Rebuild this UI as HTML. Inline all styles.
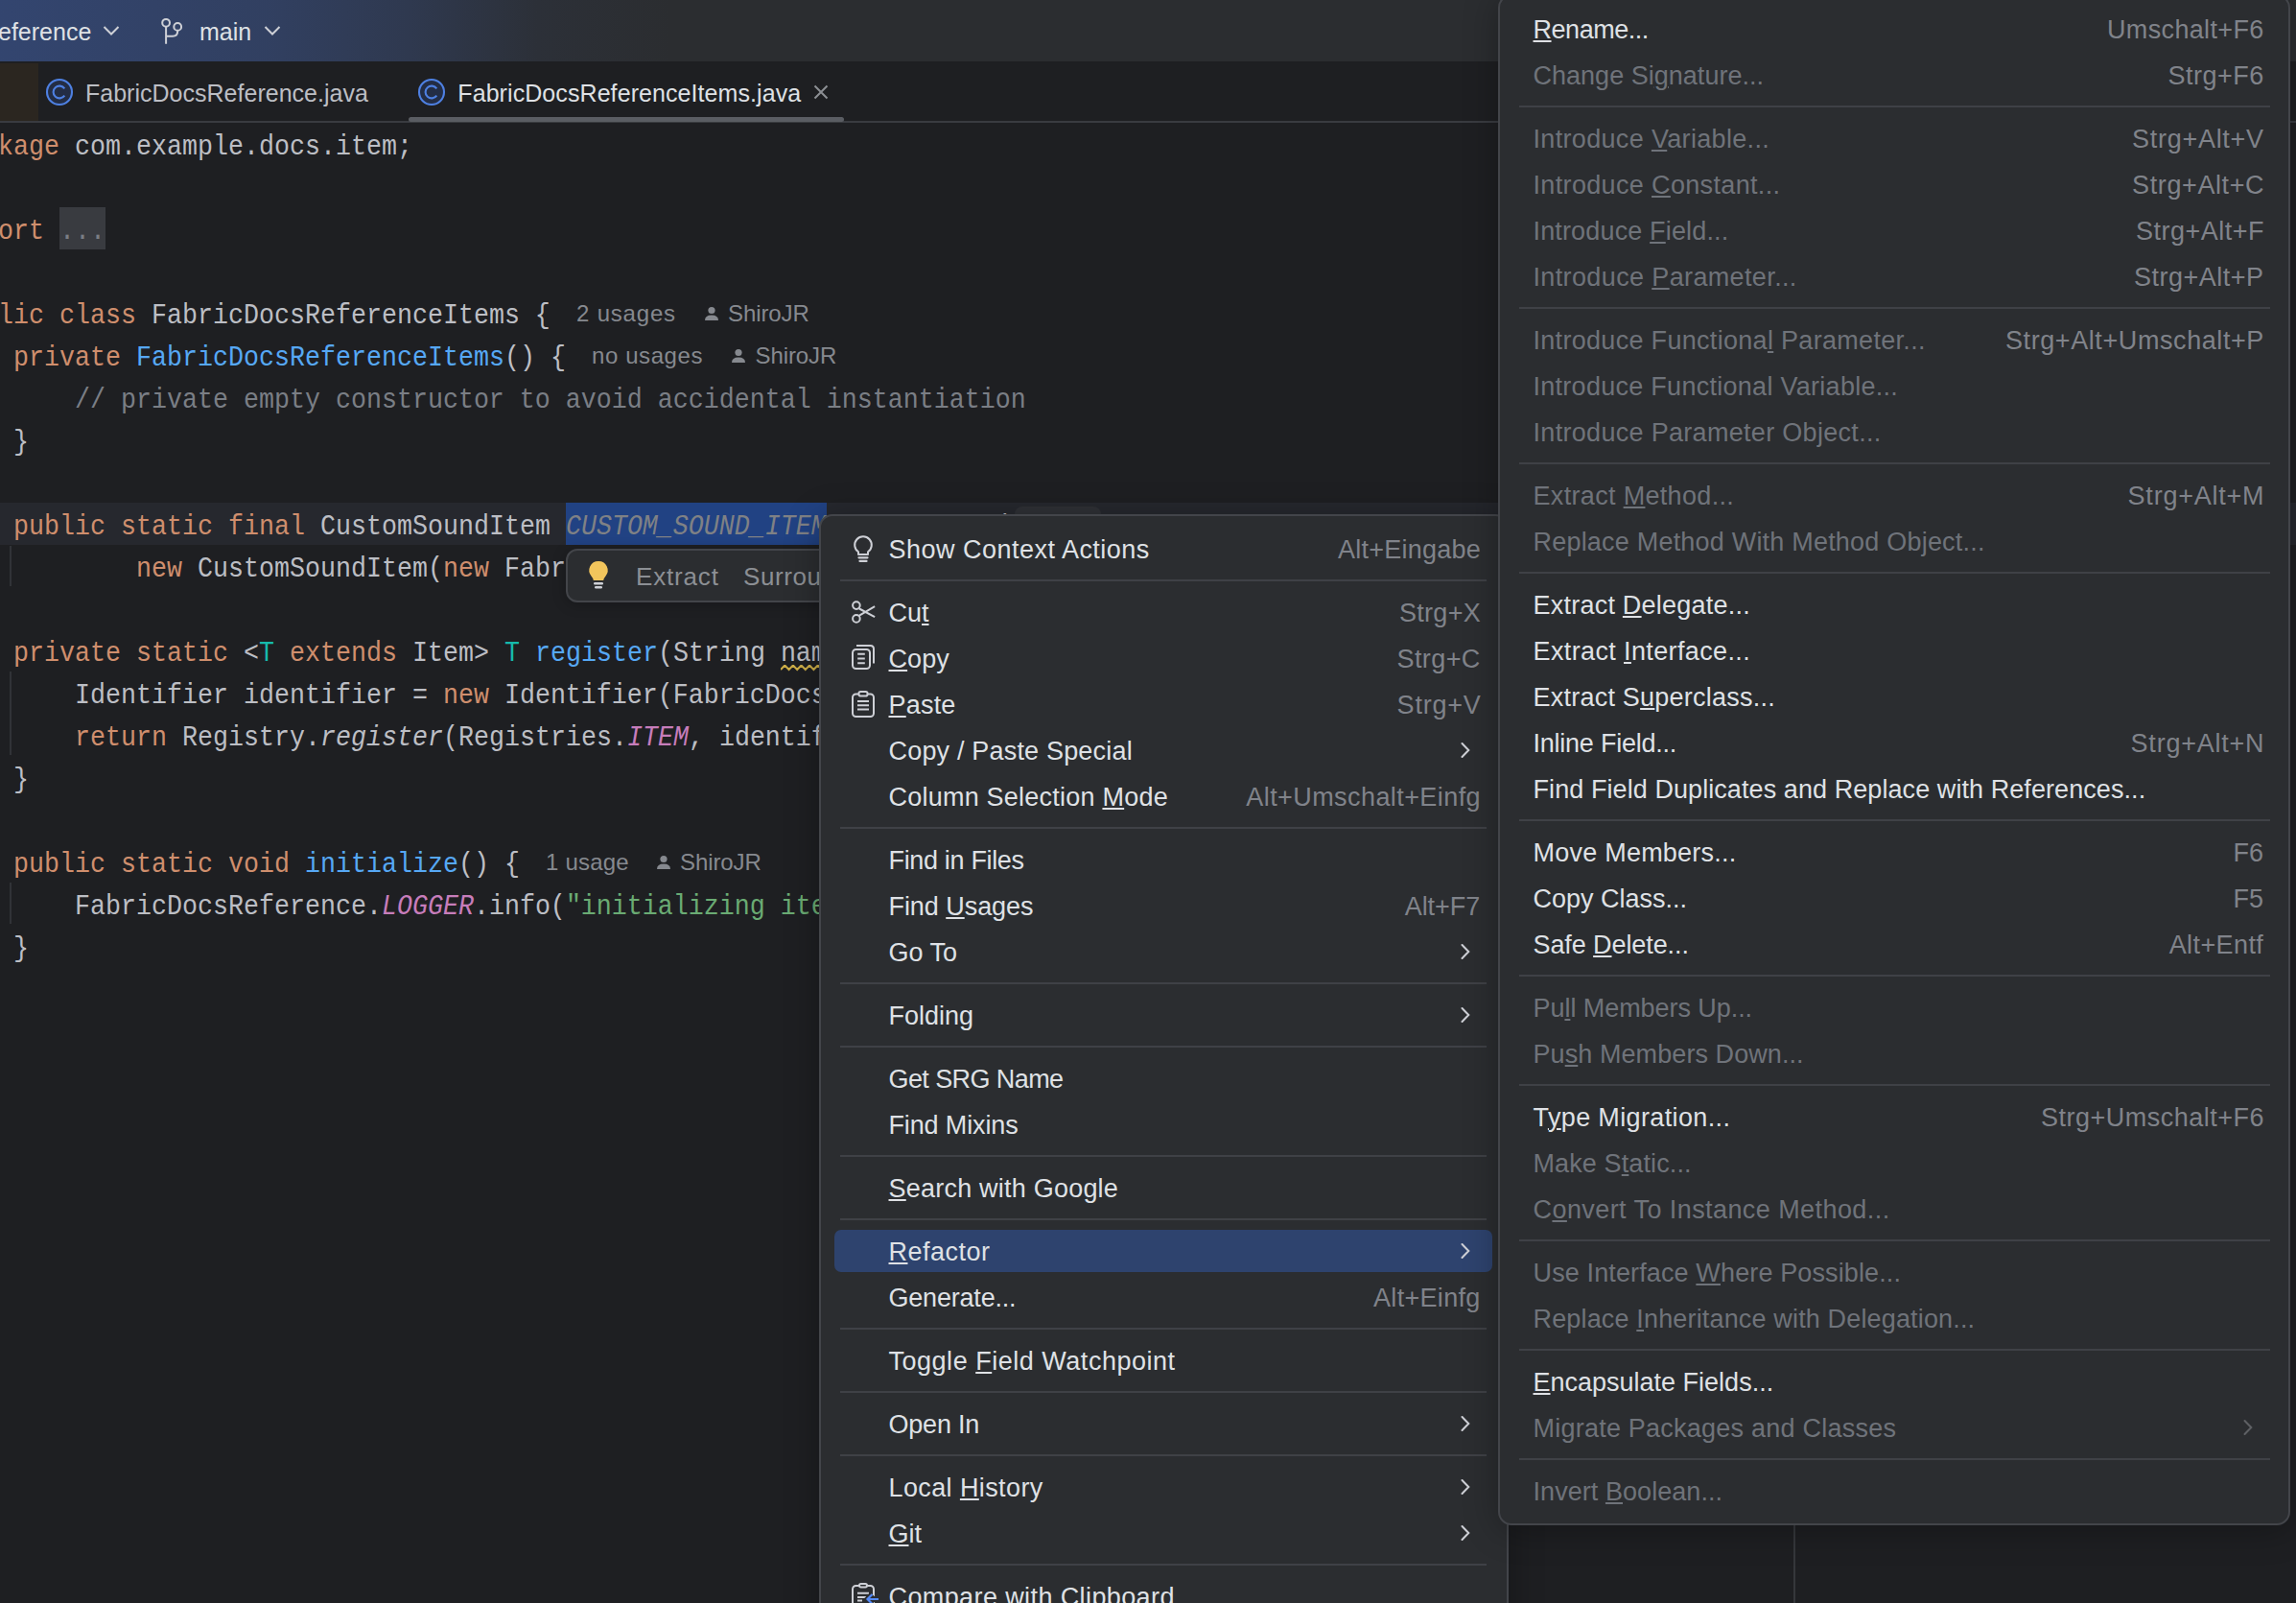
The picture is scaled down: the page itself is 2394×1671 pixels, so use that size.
<!DOCTYPE html><html><head><meta charset="utf-8"><style>
*{margin:0;padding:0;box-sizing:border-box}
html,body{width:2394px;height:1671px;overflow:hidden;background:#1E1F22;position:relative}
.a{position:absolute;white-space:pre}
.s{font-family:"Liberation Sans",sans-serif}
.m{font-family:"Liberation Mono",monospace}
.code{font-size:26.67px;line-height:44px;height:44px;color:#BCBEC4;transform:scaleY(1.08);transform-origin:0 28px}
.k{color:#CF8E6D} .f{color:#56A8F5} .c{color:#7A7E85} .st{color:#6AAB73} .sf{color:#C77DBB;font-style:italic} .tp{color:#16BAAC} .sel{color:#7F8185;font-style:italic} .it{font-style:italic}
.hint{font-size:24px;line-height:40px;color:#86898F}
.mi{font-size:27px;line-height:48px;height:48px;color:#DFE1E5}
.dis{color:#6F737A}
.sc{font-size:27px;line-height:48px;height:48px;color:#80838A;text-align:right}
.sep{position:absolute;height:2px;background:#3F4146}
u{text-decoration:underline;text-decoration-thickness:2px;text-underline-offset:2px}
</style></head><body>
<div class="a" style="left:0;top:0;width:2394px;height:64px;background:#2B2D30"></div>
<div class="a" style="left:0;top:0;width:1100px;height:64px;background:linear-gradient(90deg,rgba(56,84,150,0.62) 0px,rgba(56,84,150,0.48) 280px,rgba(56,84,150,0.3) 430px,rgba(56,84,150,0.08) 560px,rgba(43,45,48,0) 700px)"></div>
<div class="a s" style="left:-2px;top:13px;font-size:25px;line-height:40px;color:#DFE1E5">eference</div>
<svg class="a" style="left:107px;top:26px" width="18" height="12" viewBox="0 0 18 12"><path d="M1.5 2 L9 9.5 L16.5 2" fill="none" stroke="#CED0D6" stroke-width="2"/></svg>
<svg class="a" style="left:164px;top:17px" width="32" height="32" viewBox="0 0 32 32"><circle cx="9.1" cy="6.8" r="3.9" fill="none" stroke="#CED0D6" stroke-width="2"/><circle cx="21.2" cy="10.9" r="3.9" fill="none" stroke="#CED0D6" stroke-width="2"/><path d="M9.1 10.7 V28.7 M9.1 20.7 H16 Q21.2 20.7 21.2 15.5 V14.8" fill="none" stroke="#CED0D6" stroke-width="2"/></svg>
<div class="a s" style="left:208px;top:13px;font-size:25px;line-height:40px;color:#DFE1E5">main</div>
<svg class="a" style="left:275px;top:26px" width="18" height="12" viewBox="0 0 18 12"><path d="M1.5 2 L9 9.5 L16.5 2" fill="none" stroke="#CED0D6" stroke-width="2"/></svg>
<div class="a" style="left:0;top:64px;width:2394px;height:62px;background:#1E1F22"></div>
<div class="a" style="left:0;top:66px;width:40px;height:60px;background:#2B2620"></div>
<div class="a" style="left:0;top:126px;width:2394px;height:2px;background:#393B40"></div>
<svg class="a" style="left:47px;top:81px" width="30" height="30" viewBox="0 0 30 30"><circle cx="15" cy="15" r="13" fill="#232D45" stroke="#4E80E2" stroke-width="2.1"/><path d="M20.3 11.4 A6.4 6.4 0 1 0 20.3 18.6" fill="none" stroke="#4E80E2" stroke-width="2.1"/></svg>
<div class="a s" style="left:89.00px;top:77px;font-size:25px;line-height:40px;color:#BCBEC4;letter-spacing:0.013px">FabricDocsReference.java</div>
<svg class="a" style="left:435px;top:81px" width="30" height="30" viewBox="0 0 30 30"><circle cx="15" cy="15" r="13" fill="#232D45" stroke="#4E80E2" stroke-width="2.1"/><path d="M20.3 11.4 A6.4 6.4 0 1 0 20.3 18.6" fill="none" stroke="#4E80E2" stroke-width="2.1"/></svg>
<div class="a s" style="left:477.30px;top:77px;font-size:25px;line-height:40px;color:#DFE1E5;letter-spacing:0.079px">FabricDocsReferenceItems.java</div>
<svg class="a" style="left:848px;top:88px" width="16" height="16" viewBox="0 0 16 16"><path d="M1.5 1.5 L14.5 14.5 M14.5 1.5 L1.5 14.5" stroke="#8C8F94" stroke-width="2"/></svg>
<div class="a" style="left:426px;top:122px;width:454px;height:5px;border-radius:3px;background:#5A5D63"></div>
<div class="a" style="left:0;top:524px;width:2394px;height:44px;background:#26282E"></div>
<div class="a" style="left:590px;top:524px;width:272px;height:44px;background:#214283"></div>
<div class="a" style="left:1870px;top:128px;width:2px;height:1543px;background:#35373B"></div>
<div class="a" style="left:10px;top:568.6px;width:2px;height:42.39999999999998px;background:#313337"></div>
<div class="a" style="left:10px;top:700px;width:2px;height:87px;background:#313337"></div>
<div class="a" style="left:10px;top:920px;width:2px;height:43px;background:#313337"></div>
<div class="a" style="left:62px;top:216px;width:48px;height:44px;background:#393B40"></div>
<div class="a m code" style="left:-50px;top:132.00px"><span class="k">package</span> com.example.docs.item;</div>
<div class="a m code" style="left:-50px;top:220.00px"><span class="k">import</span> </div>
<div class="a m code" style="left:62px;top:220.10px;color:#7A7E85">...</div>
<div class="a m code" style="left:-50px;top:308.00px"><span class="k">public class</span> FabricDocsReferenceItems { </div>
<div class="a m code" style="left:-50px;top:352.00px">    <span class="k">private</span> <span class="f">FabricDocsReferenceItems</span>() { </div>
<div class="a m code" style="left:-50px;top:396.00px"><span class="c">        // private empty constructor to avoid accidental instantiation</span></div>
<div class="a m code" style="left:-50px;top:440.00px">    }</div>
<div class="a m code" style="left:-50px;top:528.00px">    <span class="k">public static final</span> CustomSoundItem <span class="sel">CUSTOM_SOUND_ITEM</span>           (</div>
<div class="a m code" style="left:-50px;top:572.00px">            <span class="k">new</span> CustomSoundItem(<span class="k">new</span> FabricItemSettings</div>
<div class="a m code" style="left:-50px;top:660.00px">    <span class="k">private static</span> &lt;<span class="tp">T</span> <span class="k">extends</span> Item&gt; <span class="tp">T</span> <span class="f">register</span>(String name, T item) {</div>
<div class="a m code" style="left:-50px;top:704.00px">        Identifier identifier = <span class="k">new</span> Identifier(FabricDocsReference.MOD_ID, name);</div>
<div class="a m code" style="left:-50px;top:748.00px">        <span class="k">return</span> Registry.<span class="it">register</span>(Registries.<span class="sf">ITEM</span>, identifier, item);</div>
<div class="a m code" style="left:-50px;top:792.00px">    }</div>
<div class="a m code" style="left:-50px;top:880.00px">    <span class="k">public static void</span> <span class="f">initialize</span>() { </div>
<div class="a m code" style="left:-50px;top:924.00px">        FabricDocsReference.<span class="sf">LOGGER</span>.info(<span class="st">&quot;initializing items&quot;</span>);</div>
<div class="a m code" style="left:-50px;top:968.00px">    }</div>
<svg class="a" style="left:814px;top:692.5px" width="60" height="7" viewBox="0 0 60 7"><polyline points="0.0,5.0 4.3,0.5 8.6,5.0 12.9,0.5 17.2,5.0 21.5,0.5 25.8,5.0 30.1,0.5 34.4,5.0 38.7,0.5 43.0,5.0 47.3,0.5 51.6,5.0 55.9,0.5" fill="none" stroke="#CDAE48" stroke-width="2"/></svg>
<div class="a s hint" style="left:601.00px;top:307.40px;letter-spacing:0.814px">2 usages</div>
<div class="a s hint" style="left:759.00px;top:307.40px;letter-spacing:-0.083px">ShiroJR</div>
<svg class="a" style="left:734px;top:319.1px" width="16" height="16" viewBox="0 0 16 16"><circle cx="8" cy="4.5" r="3.6" fill="#86898F"/><path d="M1 15 Q1 9.5 8 9.5 Q15 9.5 15 15 Z" fill="#86898F"/></svg>
<div class="a s hint" style="left:617.00px;top:351.40px;letter-spacing:0.588px">no usages</div>
<div class="a s hint" style="left:787.50px;top:351.40px;letter-spacing:-0.083px">ShiroJR</div>
<svg class="a" style="left:762px;top:363.1px" width="16" height="16" viewBox="0 0 16 16"><circle cx="8" cy="4.5" r="3.6" fill="#86898F"/><path d="M1 15 Q1 9.5 8 9.5 Q15 9.5 15 15 Z" fill="#86898F"/></svg>
<div class="a s hint" style="left:569.00px;top:879.40px;letter-spacing:0.200px">1 usage</div>
<div class="a s hint" style="left:709.00px;top:879.40px;letter-spacing:-0.083px">ShiroJR</div>
<svg class="a" style="left:684px;top:891.1px" width="16" height="16" viewBox="0 0 16 16"><circle cx="8" cy="4.5" r="3.6" fill="#86898F"/><path d="M1 15 Q1 9.5 8 9.5 Q15 9.5 15 15 Z" fill="#86898F"/></svg>
<div class="a" style="left:1058px;top:528px;width:90px;height:36px;border-radius:8px;background:#2F3136"></div>
<div class="a" style="left:590px;top:572px;width:300px;height:56px;border-radius:12px;background:#2B2D30;border:2px solid #43454A;box-shadow:0 2px 14px rgba(0,0,0,0.25)"></div>
<svg class="a" style="left:612px;top:583px" width="24" height="32" viewBox="0 0 24 32"><path d="M12 2 A9.5 9.5 0 0 0 4.5 17.5 Q6.5 19.8 6.8 22 H17.2 Q17.5 19.8 19.5 17.5 A9.5 9.5 0 0 0 12 2Z" fill="#F2C55C"/><rect x="7" y="24" width="10" height="2.4" rx="1.2" fill="#CED0D6"/><rect x="8" y="28" width="8" height="2.4" rx="1.2" fill="#CED0D6"/></svg>
<div class="a s" style="left:663.00px;top:581px;font-size:26px;line-height:40px;color:#8C8F94;letter-spacing:0.833px">Extract</div>
<div class="a s" style="left:775.00px;top:581px;font-size:26px;line-height:40px;color:#8C8F94;letter-spacing:0.600px">Surround</div>
<div class="a" style="left:854px;top:536px;width:719px;height:1175px;border-radius:14px;background:#2B2D30;border:2px solid #43454A;box-shadow:0 4px 36px rgba(0,0,0,0.3)"></div>
<div class="a" style="left:870px;top:1282px;width:686px;height:44px;border-radius:7px;background:#2E436E"></div>
<div class="a s mi" style="left:926.50px;top:549px;letter-spacing:0.484px">Show Context Actions</div>
<div class="a s sc" style="left:1395.00px;top:549px;letter-spacing:0.250px;text-align:left">Alt+Eingabe</div>
<div class="sep" style="left:876px;top:604px;width:674px"></div>
<div class="a s mi" style="left:926.50px;top:615px;letter-spacing:0.000px">Cu<u>t</u></div>
<div class="a s sc" style="left:1458.90px;top:615px;letter-spacing:0.320px;text-align:left">Strg+X</div>
<div class="a s mi" style="left:926.50px;top:663px;letter-spacing:0.100px"><u>C</u>opy</div>
<div class="a s sc" style="left:1456.60px;top:663px;letter-spacing:0.380px;text-align:left">Strg+C</div>
<div class="a s mi" style="left:926.50px;top:711px;letter-spacing:0.200px"><u>P</u>aste</div>
<div class="a s sc" style="left:1456.60px;top:711px;letter-spacing:0.780px;text-align:left">Strg+V</div>
<div class="a s mi" style="left:926.50px;top:759px;letter-spacing:0.184px">Copy / Paste Special</div>
<svg class="a" style="left:1521px;top:772px" width="14" height="20" viewBox="0 0 14 20"><path d="M3.5 3 L10.3 10 L3.5 17" fill="none" stroke="#CED0D6" stroke-width="2" stroke-linecap="round"/></svg>
<div class="a s mi" style="left:926.50px;top:807px;letter-spacing:0.225px">Column Selection <u>M</u>ode</div>
<div class="a s sc" style="left:1299.30px;top:807px;letter-spacing:0.424px;text-align:left">Alt+Umschalt+Einfg</div>
<div class="sep" style="left:876px;top:862px;width:674px"></div>
<div class="a s mi" style="left:926.50px;top:873px;letter-spacing:-0.333px">Find in Files</div>
<div class="a s mi" style="left:926.50px;top:921px;letter-spacing:-0.060px">Find <u>U</u>sages</div>
<div class="a s sc" style="left:1464.70px;top:921px;letter-spacing:-0.040px;text-align:left">Alt+F7</div>
<div class="a s mi" style="left:926.50px;top:969px;letter-spacing:0.000px">Go To</div>
<svg class="a" style="left:1521px;top:982px" width="14" height="20" viewBox="0 0 14 20"><path d="M3.5 3 L10.3 10 L3.5 17" fill="none" stroke="#CED0D6" stroke-width="2" stroke-linecap="round"/></svg>
<div class="sep" style="left:876px;top:1024px;width:674px"></div>
<div class="a s mi" style="left:926.50px;top:1035px;letter-spacing:-0.017px">Folding</div>
<svg class="a" style="left:1521px;top:1048px" width="14" height="20" viewBox="0 0 14 20"><path d="M3.5 3 L10.3 10 L3.5 17" fill="none" stroke="#CED0D6" stroke-width="2" stroke-linecap="round"/></svg>
<div class="sep" style="left:876px;top:1090px;width:674px"></div>
<div class="a s mi" style="left:926.50px;top:1101px;letter-spacing:-0.591px">Get SRG Name</div>
<div class="a s mi" style="left:926.50px;top:1149px;letter-spacing:-0.130px">Find Mixins</div>
<div class="sep" style="left:876px;top:1204px;width:674px"></div>
<div class="a s mi" style="left:926.50px;top:1215px;letter-spacing:0.218px"><u>S</u>earch with Google</div>
<div class="sep" style="left:876px;top:1270px;width:674px"></div>
<div class="a s mi" style="left:926.50px;top:1281px;letter-spacing:0.486px"><u>R</u>efactor</div>
<svg class="a" style="left:1521px;top:1294px" width="14" height="20" viewBox="0 0 14 20"><path d="M3.5 3 L10.3 10 L3.5 17" fill="none" stroke="#CED0D6" stroke-width="2" stroke-linecap="round"/></svg>
<div class="a s mi" style="left:926.50px;top:1329px;letter-spacing:-0.200px">Generate...</div>
<div class="a s sc" style="left:1432.00px;top:1329px;letter-spacing:0.312px;text-align:left">Alt+Einfg</div>
<div class="sep" style="left:876px;top:1384px;width:674px"></div>
<div class="a s mi" style="left:926.50px;top:1395px;letter-spacing:0.518px">Toggle <u>F</u>ield Watchpoint</div>
<div class="sep" style="left:876px;top:1450px;width:674px"></div>
<div class="a s mi" style="left:926.50px;top:1461px;letter-spacing:-0.217px">Open In</div>
<svg class="a" style="left:1521px;top:1474px" width="14" height="20" viewBox="0 0 14 20"><path d="M3.5 3 L10.3 10 L3.5 17" fill="none" stroke="#CED0D6" stroke-width="2" stroke-linecap="round"/></svg>
<div class="sep" style="left:876px;top:1516px;width:674px"></div>
<div class="a s mi" style="left:926.50px;top:1527px;letter-spacing:0.392px">Local <u>H</u>istory</div>
<svg class="a" style="left:1521px;top:1540px" width="14" height="20" viewBox="0 0 14 20"><path d="M3.5 3 L10.3 10 L3.5 17" fill="none" stroke="#CED0D6" stroke-width="2" stroke-linecap="round"/></svg>
<div class="a s mi" style="left:926.50px;top:1575px;letter-spacing:0.000px"><u>G</u>it</div>
<svg class="a" style="left:1521px;top:1588px" width="14" height="20" viewBox="0 0 14 20"><path d="M3.5 3 L10.3 10 L3.5 17" fill="none" stroke="#CED0D6" stroke-width="2" stroke-linecap="round"/></svg>
<div class="sep" style="left:876px;top:1630px;width:674px"></div>
<div class="a s mi" style="left:926.50px;top:1641px;letter-spacing:0.395px">Compare with Clipboard</div>
<svg class="a" style="left:886px;top:554px" width="28" height="36" viewBox="0 0 28 36"><path d="M9 24 V21.3 A8.8 8.8 0 1 1 19 21.3 V24 Z" fill="none" stroke="#CED0D6" stroke-width="2" stroke-linejoin="round"/><path d="M9.5 27.3 H18.5 M10.5 30.9 H17.5" stroke="#CED0D6" stroke-width="2.2" stroke-linecap="round"/></svg>
<svg class="a" style="left:886px;top:624px" width="28" height="28" viewBox="0 0 28 28"><circle cx="6.9" cy="7.1" r="3.8" fill="none" stroke="#CED0D6" stroke-width="2"/><circle cx="6.9" cy="20.9" r="3.8" fill="none" stroke="#CED0D6" stroke-width="2"/><path d="M10 10.5 L26.1 19.2 M10 17.7 L26.1 8.2" stroke="#CED0D6" stroke-width="2"/></svg>
<svg class="a" style="left:886px;top:671px" width="28" height="28" viewBox="0 0 28 28"><rect x="3" y="6" width="18" height="20" rx="3.5" fill="none" stroke="#CED0D6" stroke-width="2"/><path d="M7 2 H21.5 Q25 2 25 5.5 V20.5" fill="none" stroke="#CED0D6" stroke-width="2"/><path d="M8.2 10.7 H15.8 M8.2 15.5 H15.8 M8.2 20.3 H15.8" stroke="#CED0D6" stroke-width="2"/></svg>
<svg class="a" style="left:886px;top:718px" width="28" height="32" viewBox="0 0 28 32"><rect x="3" y="5.5" width="22" height="23.5" rx="3.5" fill="none" stroke="#CED0D6" stroke-width="2"/><rect x="9.5" y="3" width="9" height="4.5" rx="1.8" fill="#2B2D30" stroke="#CED0D6" stroke-width="2"/><path d="M8 13.1 H20 M8 17.2 H20 M8 21.4 H20" stroke="#CED0D6" stroke-width="2"/></svg>
<svg class="a" style="left:886px;top:1648px" width="34" height="30" viewBox="0 0 34 30"><rect x="3" y="5" width="22" height="26" rx="3.5" fill="none" stroke="#CED0D6" stroke-width="2"/><rect x="10" y="3" width="8" height="3.5" rx="1.7" fill="#2B2D30" stroke="#CED0D6" stroke-width="2"/><path d="M8 12.8 H20 M8 17 H17 M8 20.5 H13" stroke="#CED0D6" stroke-width="2"/><path d="M30 19 H19 M23.5 14 L18.5 19 L23.5 24" fill="none" stroke="#2B2D30" stroke-width="6"/><path d="M30 19 H19 M23.5 14 L18.5 19 L23.5 24" fill="none" stroke="#548AF7" stroke-width="2.2"/></svg>
<div class="a" style="left:1562px;top:-6px;width:826px;height:1596px;border-radius:14px;background:#2B2D30;border:2px solid #43454A;box-shadow:0 4px 36px rgba(0,0,0,0.3)"></div>
<div class="a s mi" style="left:1598.50px;top:7px;letter-spacing:-0.463px"><u>R</u>ename...</div>
<div class="a s sc" style="left:2197.00px;top:7px;letter-spacing:0.350px;text-align:left">Umschalt+F6</div>
<div class="a s mi dis" style="left:1598.50px;top:55px;letter-spacing:0.017px">Change Si<u>g</u>nature...</div>
<div class="a s sc dis" style="left:2260.50px;top:55px;letter-spacing:0.500px;text-align:left">Strg+F6</div>
<div class="sep" style="left:1584px;top:110px;width:783px"></div>
<div class="a s mi dis" style="left:1598.50px;top:121px;letter-spacing:0.330px">Introduce <u>V</u>ariable...</div>
<div class="a s sc dis" style="left:2223.10px;top:121px;letter-spacing:0.711px;text-align:left">Strg+Alt+V</div>
<div class="a s mi dis" style="left:1598.50px;top:169px;letter-spacing:0.345px">Introduce <u>C</u>onstant...</div>
<div class="a s sc dis" style="left:2223.10px;top:169px;letter-spacing:0.600px;text-align:left">Strg+Alt+C</div>
<div class="a s mi dis" style="left:1598.50px;top:217px;letter-spacing:0.153px">Introduce <u>F</u>ield...</div>
<div class="a s sc dis" style="left:2227.00px;top:217px;letter-spacing:0.500px;text-align:left">Strg+Alt+F</div>
<div class="a s mi dis" style="left:1598.50px;top:265px;letter-spacing:0.367px">Introduce <u>P</u>arameter...</div>
<div class="a s sc dis" style="left:2225.00px;top:265px;letter-spacing:0.500px;text-align:left">Strg+Alt+P</div>
<div class="sep" style="left:1584px;top:320px;width:783px"></div>
<div class="a s mi dis" style="left:1598.50px;top:331px;letter-spacing:0.303px">Introduce Functiona<u>l</u> Parameter...</div>
<div class="a s sc dis" style="left:2091.00px;top:331px;letter-spacing:0.583px;text-align:left">Strg+Alt+Umschalt+P</div>
<div class="a s mi dis" style="left:1598.50px;top:379px;letter-spacing:0.277px">Introduce Functional Variable...</div>
<div class="a s mi dis" style="left:1598.50px;top:427px;letter-spacing:0.307px">Introduce Parameter Object...</div>
<div class="sep" style="left:1584px;top:482px;width:783px"></div>
<div class="a s mi dis" style="left:1598.50px;top:493px;letter-spacing:0.325px">Extract <u>M</u>ethod...</div>
<div class="a s sc dis" style="left:2218.60px;top:493px;letter-spacing:0.767px;text-align:left">Strg+Alt+M</div>
<div class="a s mi dis" style="left:1598.50px;top:541px;letter-spacing:0.206px">Replace Method With Method Object...</div>
<div class="sep" style="left:1584px;top:596px;width:783px"></div>
<div class="a s mi" style="left:1598.50px;top:607px;letter-spacing:0.228px">Extract <u>D</u>elegate...</div>
<div class="a s mi" style="left:1598.50px;top:655px;letter-spacing:0.374px">Extract <u>I</u>nterface...</div>
<div class="a s mi" style="left:1598.50px;top:703px;letter-spacing:0.230px">Extract S<u>u</u>perclass...</div>
<div class="a s mi" style="left:1598.50px;top:751px;letter-spacing:-0.236px">Inline Field...</div>
<div class="a s sc" style="left:2221.60px;top:751px;letter-spacing:0.767px;text-align:left">Strg+Alt+N</div>
<div class="a s mi" style="left:1598.50px;top:799px;letter-spacing:0.076px">Find Field Duplicates and Replace with References...</div>
<div class="sep" style="left:1584px;top:854px;width:783px"></div>
<div class="a s mi" style="left:1598.50px;top:865px;letter-spacing:0.229px">Move Members...</div>
<div class="a s sc" style="left:2328.50px;top:865px;letter-spacing:0.000px;text-align:left">F6</div>
<div class="a s mi" style="left:1598.50px;top:913px;letter-spacing:-0.008px">Copy Class...</div>
<div class="a s sc" style="left:2328.50px;top:913px;letter-spacing:0.000px;text-align:left">F5</div>
<div class="a s mi" style="left:1598.50px;top:961px;letter-spacing:-0.092px">Safe <u>D</u>elete...</div>
<div class="a s sc" style="left:2261.70px;top:961px;letter-spacing:0.400px;text-align:left">Alt+Entf</div>
<div class="sep" style="left:1584px;top:1016px;width:783px"></div>
<div class="a s mi dis" style="left:1598.50px;top:1027px;letter-spacing:-0.059px">Pu<u>l</u>l Members Up...</div>
<div class="a s mi dis" style="left:1598.50px;top:1075px;letter-spacing:0.079px">Pu<u>s</u>h Members Down...</div>
<div class="sep" style="left:1584px;top:1130px;width:783px"></div>
<div class="a s mi" style="left:1598.50px;top:1141px;letter-spacing:0.363px">T<u>y</u>pe Migration...</div>
<div class="a s sc" style="left:2128.00px;top:1141px;letter-spacing:0.500px;text-align:left">Strg+Umschalt+F6</div>
<div class="a s mi dis" style="left:1598.50px;top:1189px;letter-spacing:0.115px">Make S<u>t</u>atic...</div>
<div class="a s mi dis" style="left:1598.50px;top:1237px;letter-spacing:0.425px">C<u>o</u>nvert To Instance Method...</div>
<div class="sep" style="left:1584px;top:1292px;width:783px"></div>
<div class="a s mi dis" style="left:1598.50px;top:1303px;letter-spacing:0.127px">Use Interface <u>W</u>here Possible...</div>
<div class="a s mi dis" style="left:1598.50px;top:1351px;letter-spacing:0.157px">Replace <u>I</u>nheritance with Delegation...</div>
<div class="sep" style="left:1584px;top:1406px;width:783px"></div>
<div class="a s mi" style="left:1598.50px;top:1417px;letter-spacing:0.000px"><u>E</u>ncapsulate Fields...</div>
<div class="a s mi dis" style="left:1598.50px;top:1465px;letter-spacing:0.230px">Migrate Packages and Classes</div>
<svg class="a" style="left:2336.5px;top:1478px" width="14" height="20" viewBox="0 0 14 20"><path d="M3.5 3 L10.3 10 L3.5 17" fill="none" stroke="#5E6064" stroke-width="2" stroke-linecap="round"/></svg>
<div class="sep" style="left:1584px;top:1520px;width:783px"></div>
<div class="a s mi dis" style="left:1598.50px;top:1531px;letter-spacing:0.056px">Invert <u>B</u>oolean...</div>
</body></html>
